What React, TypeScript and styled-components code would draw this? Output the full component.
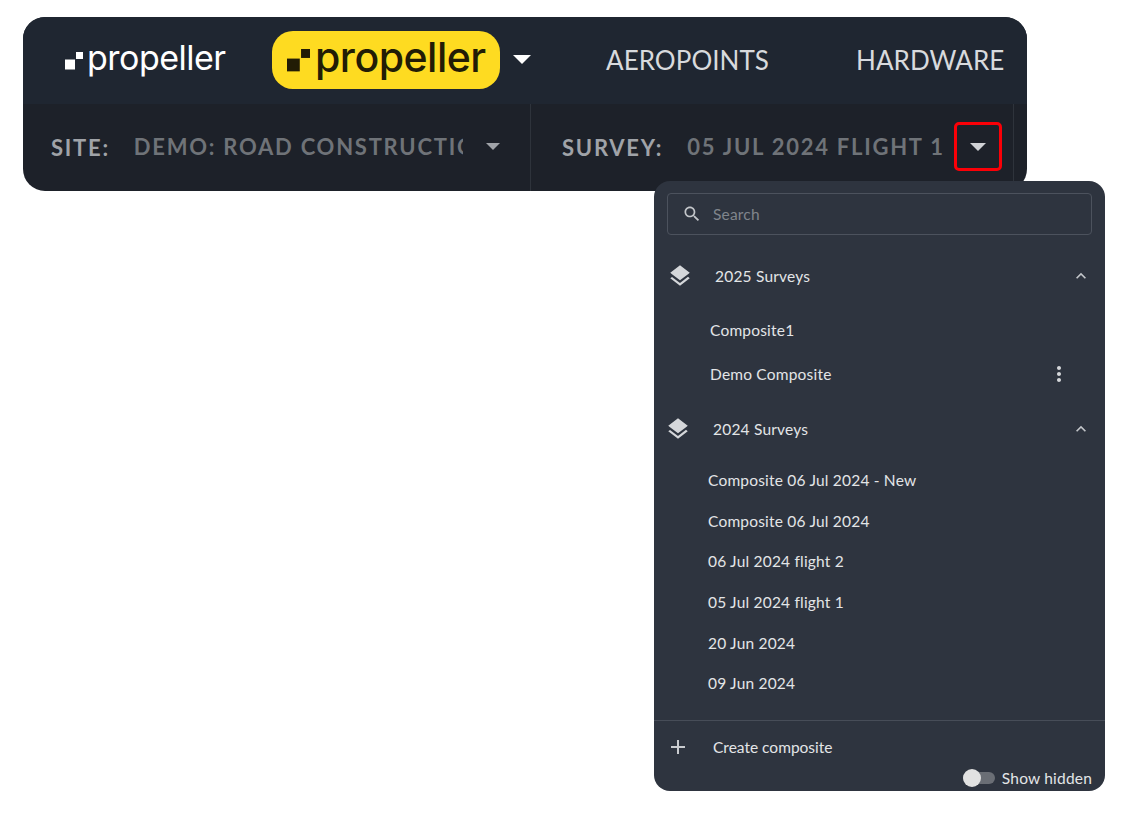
import styled, { createGlobalStyle } from "styled-components";

const GlobalStyle = createGlobalStyle`
  html, body {
    margin: 0;
    background: #ffffff;
    font-family: "Lato", "Open Sans", sans-serif;
  }
`;

const Page = styled.div`
  position: relative;
  width: 1144px;
  height: 835px;
  padding: 17px 0 0 23px;
  box-sizing: border-box;
`;

const Toolbar = styled.div`
  width: 1004px;
  height: 174px;
  border-radius: 22px;
  overflow: hidden;
  background: #1d2129;
`;

const TopRow = styled.div`
  display: flex;
  align-items: center;
  height: 87px;
  padding: 0 0 2px 42px;
  box-sizing: border-box;
  background: #1f2631;
`;

const Logo = styled.div<{ $dark?: boolean; $size: number; $width: number }>`
  display: flex;
  align-items: center;
  flex: none;
  gap: ${(p) => (p.$dark ? 5 : 4)}px;
  width: ${(p) => p.$width}px;
  color: ${(p) => (p.$dark ? "#221c05" : "#ffffff")};
  font-family: "Inter", sans-serif;
  font-size: ${(p) => p.$size}px;
  font-weight: ${(p) => (p.$dark ? 500 : 400)};
  line-height: 1;
  letter-spacing: -0.5px;
  svg {
    flex: none;
    fill: currentColor;
    margin-top: 2px;
  }
`;

const LogoText = styled.span`
  padding-bottom: 4px;
`;

const Pill = styled.div`
  display: flex;
  align-items: center;
  flex: none;
  width: 228px;
  height: 58px;
  margin-left: 47px;
  padding-left: 15px;
  box-sizing: border-box;
  border-radius: 21px;
  background: #fedb21;
`;

const Caret = styled.svg<{ $shade: string; $gap?: number }>`
  flex: none;
  fill: ${(p) => p.$shade};
  margin-left: ${(p) => p.$gap ?? 0}px;
`;

const NavLink = styled.a<{ $gap: number }>`
  margin-left: ${(p) => p.$gap}px;
  color: #d8dadd;
  font-size: 26px;
  letter-spacing: 0.05px;
  white-space: nowrap;
`;

const BottomRow = styled.div`
  display: flex;
  height: 87px;
`;

const Section = styled.div<{ $width: number; $pad: number }>`
  display: flex;
  align-items: center;
  width: ${(p) => p.$width}px;
  padding: 0 0 2px ${(p) => p.$pad}px;
  box-sizing: border-box;
  border-right: 1px solid #2e333b;
  font-size: 22px;
  font-weight: 700;
  letter-spacing: 1.75px;
  white-space: nowrap;
`;

const Label = styled.span`
  color: #a0a3a8;
  margin-top: 2px;
`;

const Value = styled.span<{ $width: number }>`
  width: ${(p) => p.$width}px;
  margin-left: 24px;
  overflow: hidden;
  color: #6f7378;
`;

const CaretBox = styled.div`
  display: flex;
  align-items: center;
  justify-content: center;
  flex: none;
  width: 48px;
  height: 49px;
  margin-left: 9px;
  box-sizing: border-box;
  border: 3px solid #fb0007;
  border-radius: 5px;
`;

const Menu = styled.div`
  position: absolute;
  top: 181px;
  left: 654px;
  display: flex;
  flex-direction: column;
  width: 451px;
  height: 610px;
  padding-top: 12px;
  box-sizing: border-box;
  border-radius: 16px;
  background: #2e343f;
  color: #e3e5e7;
  font-size: 15.5px;
  letter-spacing: 0.2px;
`;

const SearchBox = styled.div`
  display: flex;
  align-items: center;
  gap: 11px;
  flex: none;
  height: 42px;
  margin: 0 13px;
  padding-left: 14px;
  box-sizing: border-box;
  border: 1px solid #4c525d;
  border-radius: 4px;
  color: #80858c;
  svg {
    fill: #c3c6ca;
  }
`;

const GroupHeader = styled.div<{ $top: number; $pad: number; $gap: number }>`
  display: flex;
  align-items: center;
  height: 24px;
  margin-top: ${(p) => p.$top}px;
  padding: 0 14px 0 ${(p) => p.$pad}px;
  gap: ${(p) => p.$gap}px;
`;

const GroupIcon = styled.svg`
  flex: none;
  fill: #d5d7da;
`;

const Chevron = styled.svg`
  flex: none;
  margin-left: auto;
  fill: #c3c6ca;
`;

const ItemList = styled.div<{ $top: number; $pad: number; $step: number }>`
  display: flex;
  flex-direction: column;
  margin-top: ${(p) => p.$top}px;
  padding-left: ${(p) => p.$pad}px;
  > div {
    height: ${(p) => p.$step}px;
  }
`;

const Item = styled.div`
  display: flex;
  align-items: center;
  padding-right: 34px;
`;

const MoreIcon = styled.svg`
  margin-left: auto;
  fill: #d5d7da;
`;

const Footer = styled.div`
  margin-top: auto;
  border-top: 1px solid #474d58;
  height: 71px;
  box-sizing: border-box;
`;

const CreateRow = styled.div`
  display: flex;
  align-items: center;
  gap: 23px;
  height: 24px;
  margin-top: 14px;
  padding-left: 12px;
  letter-spacing: 0;
  svg {
    flex: none;
    fill: #c9cbcf;
  }
`;

const ToggleRow = styled.div`
  display: flex;
  align-items: center;
  justify-content: flex-end;
  gap: 7px;
  height: 20px;
  margin-top: 9px;
  padding-right: 13px;
`;

const ToggleTrack = styled.div`
  position: relative;
  width: 32px;
  height: 12px;
  border-radius: 6px;
  background: #6a6e75;
`;

const ToggleKnob = styled.div`
  position: absolute;
  top: -3px;
  left: 0;
  width: 18px;
  height: 18px;
  border-radius: 50%;
  background: #e2e2e2;
`;

const layersPath =
  "M11.99 18.54l-7.37-5.73L3 14.07l9 7 9-7-1.63-1.27-7.38 5.74zM12 16l7.36-5.73L21 9l-9-7-9 7 1.63 1.27L12 16z";
const chevronPath = "M12 8l-6 6 1.41 1.41L12 10.83l4.59 4.58L18 14z";

const LogoMark = ({ size }: { size: number }) => (
  <svg width={size} height={size} viewBox="0 0 18 18">
    <rect x="0" y="7.5" width="10" height="10" />
    <rect x="11" y="0" width="7" height="7" />
  </svg>
);

const DownCaret = ({ shade, width, gap }: { shade: string; width: number; gap?: number }) => (
  <Caret $shade={shade} $gap={gap} width={width} height={width / 2} viewBox="0 0 16 8">
    <path d="M0 0h16L8 8z" />
  </Caret>
);

const Group = ({ title, top, pad, gap }: { title: string; top: number; pad: number; gap: number }) => (
  <GroupHeader $top={top} $pad={pad} $gap={gap}>
    <GroupIcon width="26" height="26" viewBox="0 0 24 24">
      <path d={layersPath} />
    </GroupIcon>
    <span>{title}</span>
    <Chevron width="20" height="20" viewBox="0 0 24 24">
      <path d={chevronPath} />
    </Chevron>
  </GroupHeader>
);

const surveys2024 = [
  "Composite 06 Jul 2024 - New",
  "Composite 06 Jul 2024",
  "06 Jul 2024 flight 2",
  "05 Jul 2024 flight 1",
  "20 Jun 2024",
  "09 Jun 2024",
];

export default function App() {
  return (
    <Page>
      <GlobalStyle />
      <Toolbar>
        <TopRow>
          <Logo $size={34} $width={160}>
            <LogoMark size={18} />
            <LogoText>propeller</LogoText>
          </Logo>
          <Pill>
            <Logo $dark $size={41} $width={200}>
              <LogoMark size={23} />
              <LogoText>propeller</LogoText>
            </Logo>
          </Pill>
          <DownCaret shade="#ffffff" width={18} gap={13} />
          <NavLink $gap={75}>AEROPOINTS</NavLink>
          <NavLink $gap={87}>HARDWARE</NavLink>
        </TopRow>
        <BottomRow>
          <Section $width={508} $pad={28}>
            <Label>SITE:</Label>
            <Value $width={329}>DEMO: ROAD CONSTRUCTION</Value>
            <DownCaret shade="#a0a3a8" width={14} gap={23} />
          </Section>
          <Section $width={483} $pad={31}>
            <Label>SURVEY:</Label>
            <Value $width={258}>05 JUL 2024 FLIGHT 1</Value>
            <CaretBox>
              <DownCaret shade="#d0d2d5" width={16} />
            </CaretBox>
          </Section>
        </BottomRow>
      </Toolbar>
      <Menu>
        <SearchBox>
          <svg width="20" height="20" viewBox="0 0 24 24">
            <path d="M15.5 14h-.79l-.28-.27C15.41 12.59 16 11.11 16 9.5 16 5.91 13.09 3 9.5 3S3 5.91 3 9.5 5.91 16 9.5 16c1.61 0 3.09-.59 4.23-1.57l.27.28v.79l5 4.99L20.49 19l-4.99-5zm-6 0C7.01 14 5 11.99 5 9.5S7.01 5 9.5 5 14 7.01 14 9.5 11.99 14 9.5 14z" />
          </svg>
          <span>Search</span>
        </SearchBox>
        <Group title="2025 Surveys" top={29} pad={13} gap={22} />
        <ItemList $top={20} $pad={56} $step={44}>
          <Item>Composite1</Item>
          <Item>
            Demo Composite
            <MoreIcon width="24" height="24" viewBox="0 0 24 24">
              <path d="M12 8c1.1 0 2-.9 2-2s-.9-2-2-2-2 .9-2 2 .9 2 2 2zm0 2c-1.1 0-2 .9-2 2s.9 2 2 2 2-.9 2-2-.9-2-2-2zm0 6c-1.1 0-2 .9-2 2s.9 2 2 2 2-.9 2-2-.9-2-2-2z" />
            </MoreIcon>
          </Item>
        </ItemList>
        <Group title="2024 Surveys" top={21} pad={11} gap={22} />
        <ItemList $top={19} $pad={54} $step={40.6}>
          {surveys2024.map((name) => (
            <Item key={name}>{name}</Item>
          ))}
        </ItemList>
        <Footer>
          <CreateRow>
            <svg width="24" height="24" viewBox="0 0 24 24">
              <path d="M19 13h-6v6h-2v-6H5v-2h6V5h2v6h6v2z" />
            </svg>
            <span>Create composite</span>
          </CreateRow>
          <ToggleRow>
            <ToggleTrack>
              <ToggleKnob />
            </ToggleTrack>
            <span>Show hidden</span>
          </ToggleRow>
        </Footer>
      </Menu>
    </Page>
  );
}
